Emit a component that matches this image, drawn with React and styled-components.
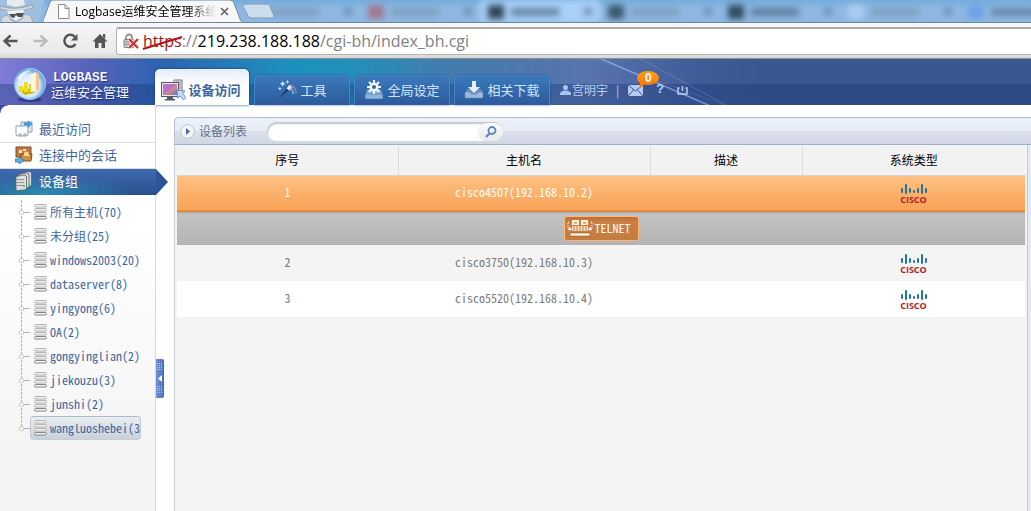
import React from "react";
import styled, { createGlobalStyle, css } from "styled-components";

const ui = `"Noto Sans CJK SC", "Liberation Sans", sans-serif`;
const chromeFont = `"Open Sans", "Noto Sans CJK SC", sans-serif`;

const GlobalStyle = createGlobalStyle`
  *, *::before, *::after { box-sizing: border-box; }
  body { margin: 0; background: #fff; font: 12px/16px ${ui}; color: #000; }
  button, input { font: inherit; color: inherit; border: 0; padding: 0; margin: 0; background: none; }
  a { color: inherit; text-decoration: none; }
  ul { list-style: none; margin: 0; padding: 0; }
  svg { display: block; flex: none; }
`;

const Page = styled.div`
  display: flex;
  flex-direction: column;
  min-height: 100vh;
  overflow: hidden;
`;

/* ---------- browser chrome ---------- */

const TabStrip = styled.div`
  display: flex;
  height: 23px;
  overflow: hidden;
  background: linear-gradient(#73addb, #8fb9e3 40%, #8db6e1);
  border-bottom: 1px solid #6788ab;
`;

const BrowserTab = styled.div`
  display: flex;
  align-items: center;
  position: relative;
  z-index: 1;
  flex: none;
  width: 200px;
  height: 23px;
  margin-left: -1px;
  padding: 0 15px 0 14px;
`;

const TabShape = styled.svg`
  position: absolute;
  z-index: -1;
  inset: 0;
`;

const TabTitle = styled.span`
  flex: 1;
  margin: 0 4px 0 5px;
  overflow: hidden;
  white-space: nowrap;
  font: 12px/20px ${chromeFont};
  mask-image: linear-gradient(90deg, #000 80%, transparent);
`;

const IconButton = styled.button`
  position: relative;
  z-index: 1;
  display: flex;
  align-items: center;
  justify-content: center;
`;

const BackgroundTabs = styled.div`
  display: flex;
  flex: none;
  margin-left: -38px;
  filter: blur(3px);
`;

const BackgroundTab = styled.div`
  display: flex;
  align-items: center;
  gap: 7px;
  flex: none;
  width: 120px;
  height: 23px;
  padding-left: 8px;
  background: ${(p) => (p.$lit ? "#a9d0f8" : "transparent")};
`;

const Smudge = styled.i`
  width: ${(p) => p.$w}px;
  height: ${(p) => p.$h}px;
  margin-left: ${(p) => (p.$push ? "auto" : 0)};
  margin-right: ${(p) => (p.$push ? "8px" : 0)};
  background: ${(p) => p.$c};
`;

const Toolbar = styled.div`
  display: flex;
  align-items: center;
  height: 36px;
  padding: 0 0 0 2px;
  background: linear-gradient(#f7f7f7, #e9e9e9 85%, #d6d6d6);
  border-bottom: 1px solid #8f8f8f;
`;

const ToolButtons = styled.div`
  display: flex;
  gap: 13px;
  width: 114px;
`;

const AddressBar = styled.div`
  display: flex;
  align-items: center;
  gap: 4px;
  flex: 1;
  height: 28px;
  padding-left: 6px;
  background: #fff;
  border: 1px solid #b4b4b4;
  border-top: 2px solid #a8a8a8;
  border-right: 0;
  border-radius: 3px 0 0 3px;
`;

const Url = styled.div`
  font: 16px/24px ${chromeFont};
  color: #808080;
  white-space: nowrap;
  outline: 0;
`;

const Host = styled.span`
  color: #000;
`;

const BadScheme = styled.span`
  position: relative;
  color: #a51414;
  &::after {
    content: "";
    position: absolute;
    left: -1px;
    right: -1px;
    top: 12px;
    height: 2px;
    background: #b01515;
    transform: rotate(-17deg);
  }
`;

/* ---------- application header ---------- */

const Header = styled.header`
  display: flex;
  position: relative;
  height: 46px;
  background:
    linear-gradient(transparent 54%, rgba(20, 50, 115, 0.36) 54%, rgba(20, 50, 115, 0.3)),
    linear-gradient(90deg, #7f7cd6 0, #5763bb 90px, #2d63b2 160px, #1c91bd 290px, #2290bb 350px, #447cad 450px, #5873ae 590px, #3f5c98 700px, #3b578f 760px);
`;

const Beams = styled.svg`
  position: absolute;
  top: 0;
  left: 590px;
`;

const Brand = styled.div`
  display: flex;
  align-items: center;
  gap: 4px;
  position: relative;
  flex: none;
  width: 155px;
  padding: 4px 0 0 12px;
  color: #f4f6ff;
`;

const BrandText = styled.div`
  display: flex;
  flex-direction: column;
  font: 13px/14px ${ui};
  white-space: nowrap;
  text-shadow: 1px 1px 1px #1c2f78;
`;

const BrandName = styled.strong`
  padding-left: 2px;
  font: bold 13px/15px "Liberation Mono", monospace;
`;

const MainNav = styled.nav`
  position: relative;
  display: flex;
  align-items: flex-end;
  gap: 4px;
`;

const NavTab = styled.a`
  display: flex;
  align-items: center;
  justify-content: center;
  gap: 3px;
  width: 96px;
  height: 30px;
  border: 1px solid rgba(90, 150, 215, 0.6);
  border-bottom: 0;
  border-radius: 5px 5px 0 0;
  background: linear-gradient(#3a79bb, #2c5a9c);
  box-shadow: 0 0 2px #1d4b8d;
  color: #d3e3fb;
  font-size: 13px;
  padding-bottom: 1px;
  white-space: nowrap;
  ${(p) =>
    p.$active &&
    css`
      gap: 2px;
      width: 94px;
      height: 36px;
      margin-right: 1px;
      border: 0;
      background: linear-gradient(#e6edf9, #fff 50%);
      box-shadow: 0 0 3px #123a78;
      color: #3e65a2;
      font-weight: bold;
      padding: 6px 2px 0 0;
    `}
`;

const UserBar = styled.div`
  display: flex;
  align-items: center;
  position: relative;
  height: 30px;
  margin: 16px 0 0 10px;
  color: #b9cdf3;
`;

const UserName = styled.span`
  margin: 0 8px 0 1px;
`;

const MailButton = styled(IconButton)`
  width: 15px;
  margin: 0 13px 0 9px;
`;

const Badge = styled.span`
  position: absolute;
  left: 9px;
  bottom: 11px;
  width: 22px;
  height: 14px;
  border-radius: 50%;
  background: linear-gradient(#ff9f0a, #f57b12);
  color: #fff;
  font: bold 12px/14px "Liberation Sans", sans-serif;
  text-align: center;
  &::after {
    content: "";
    position: absolute;
    left: 3px;
    top: 12px;
    border-top: 5px solid #f57b12;
    border-right: 6px solid transparent;
  }
`;

const HelpButton = styled(IconButton)`
  width: 8px;
  margin-right: 13px;
  font: bold 13px/16px "Liberation Mono", monospace;
`;

/* ---------- body ---------- */

const Body = styled.div`
  display: flex;
  flex: 1;
`;

const Sidebar = styled.aside`
  flex: none;
  width: 156px;
  border-right: 1px solid #d9d9d9;
  background: linear-gradient(#fff 30%, #f3f3f3 90%);
  position: relative;
  &::before {
    content: "";
    position: absolute;
    left: 0;
    top: 0;
    width: 8px;
    height: 8px;
    background: radial-gradient(circle at 100% 100%, transparent 7px, #3e4ba5 8px);
  }
`;

const SideLink = styled.a`
  display: flex;
  align-items: center;
  gap: 6px;
  position: relative;
  height: 26px;
  padding: 0 0 2px 15px;
  border-bottom: 1px solid #dcdcdc;
  color: #41669c;
  font-size: 13px;
  ${(p) =>
    p.$active &&
    css`
      margin-right: -1px;
      border: 0;
      color: #fff;
      background:
        radial-gradient(ellipse at 42px 24px, rgba(45, 145, 180, 0.9), transparent 90px),
        linear-gradient(#3f6aae, #285091);
      &::after {
        content: "";
        position: absolute;
        left: 100%;
        top: 0;
        border: 13px solid transparent;
        border-left: 12px solid #2b5598;
        border-right: 0;
      }
    `}
`;

const SideMenu = styled.ul`
  padding-top: 12px;
`;

const Tree = styled.ul`
  margin: 5px 14px 0 21px;
`;

const TreeItem = styled.li`
  display: flex;
  align-items: center;
  height: 24px;
  background: repeating-linear-gradient(#b2b2c0 0 3px, transparent 3px 4px) 0 0 / 1px ${(p) => (p.$last ? "12px" : "24px")} no-repeat;
  &::before {
    content: "";
    flex: none;
    width: 5px;
    height: 5px;
    margin-left: -2px;
    border: 1px solid #c6c6d0;
    border-radius: 2px;
    background: #fff;
  }
`;

const Twig = styled.span`
  flex: none;
  width: 6px;
  border-top: 1px dashed #b2b2c0;
`;

const TreeLink = styled.a`
  display: flex;
  align-items: center;
  gap: 2px;
  flex: 1;
  min-width: 0;
  height: 24px;
  padding-left: 3px;
  border: 1px solid transparent;
  border-radius: 4px;
  color: #41669c;
  overflow: hidden;
  white-space: nowrap;
  font-feature-settings: "hwid";
  ${(p) =>
    p.$selected &&
    css`
      border-color: #a9bac8 #bccad6 #c6cfd8;
      background: linear-gradient(#eaeef1, #c9d1d9);
    `}
`;

const Gutter = styled.div`
  flex: none;
  width: 18px;
`;

const Splitter = styled.button`
  display: flex;
  flex-direction: column;
  align-items: center;
  justify-content: space-between;
  width: 8px;
  height: 39px;
  margin-top: 254px;
  padding: 4px 0;
  border-radius: 0 2px 2px 0;
  background: linear-gradient(90deg, #6f8fd2, #5378c4 80%, #3f62ad);
`;

const Panel = styled.main`
  display: flex;
  flex-direction: column;
  flex: 1;
  min-width: 0;
  margin-top: 12px;
  border-left: 1px solid #cdd0d6;
  border-radius: 5px 0 0 0;
  background: #f3f3f3;
`;

const PanelHeader = styled.div`
  display: flex;
  align-items: center;
  height: 28px;
  padding-left: 5px;
  margin-left: -1px;
  border: 1px solid #b5c0d6;
  border-right: 0;
  border-bottom: 1px solid #9fb0cd;
  border-radius: 5px 0 0 0;
  background: linear-gradient(#ecf1fa, #e6ebf6 50%, #dae0eb 50%, #d0d7e4);
`;

const PanelTitle = styled.h1`
  margin: 0 20px 0 4px;
  font: 12px/16px ${ui};
  color: #66738a;
`;

const SearchForm = styled.form`
  display: flex;
  width: 236px;
  height: 19px;
  border-radius: 9px;
  background: #fff;
  box-shadow: inset 1px 2px 2px #c3c6cb;
`;

const SearchInput = styled.input`
  flex: 1;
  min-width: 0;
  padding: 0 8px;
  outline: 0;
`;

const SearchButton = styled(IconButton)`
  width: 25px;
  margin-top: 1px;
  border-radius: 9px;
  background: linear-gradient(#fbfbfb, #e9e9e9);
  box-shadow: 0 0 1px #bbb;
`;

const PanelBody = styled.div`
  flex: 1;
  margin-right: 3px;
  padding: 1px 2px 0;
  border-right: 1px solid #c3c9d4;
  box-shadow: 3px 0 0 #e3eaf6;
`;

const Table = styled.table`
  width: 100%;
  border-collapse: collapse;
  table-layout: fixed;
  text-align: center;
  font-feature-settings: "hwid";
`;

const HeadCell = styled.th`
  width: ${(p) => (p.$width ? `${p.$width}px` : "auto")};
  height: 29px;
  padding: 0 0 1px;
  font-weight: normal;
  background: #f2f2f2;
  border-bottom: 1px solid #d4d4d4;
  & + & {
    border-left: 1px solid #dcdcdc;
  }
`;

const Row = styled.tr`
  height: 36px;
  background: ${(p) => (p.$odd ? "#fff" : "#f4f4f4")};
  color: #7b7b7b;
  ${(p) =>
    p.$selected &&
    css`
      height: 37px;
      background: linear-gradient(#ffc286, #f8a65b 80%, #f8a65b 94%, #e48a38 94%);
      color: #fff;
    `}
`;

const ActionRow = styled.tr`
  height: 33px;
  background: linear-gradient(#a4a4a4, #c3c3c3 2px, #b3b3b3);
`;

const Cell = styled.td`
  padding: 0 0 3px;
`;

const ActionCell = styled.td`
  padding: 0;
`;

const TelnetButton = styled.button`
  display: flex;
  align-items: center;
  gap: 2px;
  width: 75px;
  height: 25px;
  margin: 0 auto;
  padding: 0 0 1px 2px;
  border: 1px solid #fdb777;
  border-radius: 3px;
  background: linear-gradient(#bd7038, #cb8046 25%, #c57b3d);
  color: #fff;
  font-feature-settings: "hwid";
`;

const CiscoMark = styled.div`
  display: inline-flex;
  flex-direction: column;
  align-items: center;
  padding-top: 4px;
  vertical-align: middle;
  color: #b11e2b;
  font: bold 9px/9px "Open Sans", sans-serif;
`;

/* ---------- drawings ---------- */

const Incognito = () => (
  <svg width="45" height="23" viewBox="0 0 45 23">
    <path d="M0 0h45l-6 20q-1 3-5 3H0z" fill="#9ebfdf" />
    <path d="M7 0h17l1 5-9 2-9-2z" fill="#e8eaec" />
    <path d="M0 6q14 5 32-1l1 3Q15 14 0 9z" fill="#d2d6da" stroke="#8d959d" strokeWidth=".7" />
    <path d="M7 11l17-1-2 7-6 4-6-4z" fill="#f0f1f2" />
    <path d="M9 14h6l2-1 7 0-2 4-4 0-2-2-2 3-3-1z" fill="#4d5257" />
    <path d="M1 23l1-6 6-2 3 5 5 2 6-3 3-5 6 2 2 7z" fill="#d6d9dc" stroke="#9aa2aa" strokeWidth=".7" />
  </svg>
);

const PageIcon = () => (
  <svg width="12" height="15" viewBox="0 0 12 15" fill="#fff" stroke="#8c8c8c">
    <path d="M.5.5H7L11 4.500v10H.5zM7 .5v4h4" />
  </svg>
);

const Close = () => (
  <svg width="9" height="9" viewBox="0 0 9 9" stroke="#666" strokeWidth="1.7">
    <path d="M1 1l7 7M8 1L1 8" />
  </svg>
);

const Arrow = ({ back }) => (
  <svg width="17" height="14" viewBox="0 0 16 14" fill="none" stroke={back ? "#555" : "#bcbcbc"} strokeWidth="2.4">
    <path d={back ? "M15 7H3M8 1.5L2 7l6 5.500" : "M1 7h12M8 1.500L14 7l-6 5.500"} />
  </svg>
);

const Reload = () => (
  <svg width="17" height="16" viewBox="0 0 17 16">
    <path d="M13.500 11a6 6 0 1 1-.5-7" fill="none" stroke="#555" strokeWidth="2.5" />
    <path d="M15.500 1v6.500H9z" fill="#555" />
  </svg>
);

const Home = () => (
  <svg width="16" height="16" viewBox="0 0 16 16" fill="#555">
    <path d="M8 1l7.500 7.500H13V15h-3.500v-5h-3v5H3V8.500H.5z" />
    <path d="M11 1h2.200v5L11 4z" />
  </svg>
);

const BrokenLock = () => (
  <svg width="16" height="16" viewBox="0 0 16 16" fill="none">
    <path d="M3 7V4.500a3 3 0 0 1 6 0V7" stroke="#929292" strokeWidth="1.8" />
    <rect x="1" y="6.500" width="10" height="8" rx="1" fill="#c9c9c9" stroke="#858585" />
    <path d="M2 9h8M2 11.500h8" stroke="#999" />
    <path d="M6 6l9 9M15 6l-9 9" stroke="#fff" strokeWidth="3.500" />
    <path d="M6 6l9 9M15 6l-9 9" stroke="#d3302d" strokeWidth="2.200" />
  </svg>
);

const Globe = () => (
  <svg width="35" height="35" viewBox="0 0 35 35">
    <defs>
      <radialGradient id="orb" cx=".45" cy=".55" r=".58">
        <stop offset="0" stopColor="#fff" />
        <stop offset=".6" stopColor="#d3e9fb" />
        <stop offset=".85" stopColor="#6ba6e3" />
        <stop offset="1" stopColor="#b9dcfa" />
      </radialGradient>
    </defs>
    <ellipse cx="18" cy="32.500" rx="12" ry="2.500" fill="#222f75" opacity=".7" />
    <circle cx="18" cy="17" r="16" fill="url(#orb)" />
    <path d="M6 23l18-2-2 5-9 2z" fill="#d3b400" />
    <path d="M7 19h4v6H7zM12 15h4v10h-4z" fill="#f0dc1c" />
    <path d="M17 17h5v8h-5z" fill="#e6cf14" />
    <path d="M19 8l5-3v19l-5 1z" fill="#fdf8d8" />
    <path d="M24 5l3 2v15l-3 2z" fill="#f5c48c" />
    <path d="M5 12q5-9 15-9-9 3-11 9z" fill="#fff" opacity=".8" />
  </svg>
);

const Monitor = () => (
  <svg width="25" height="23" viewBox="0 0 25 23">
    <path d="M13 1h8v15h-8z" fill="#e9ebee" stroke="#777" />
    <path d="M15 3h5M15 5h5M15 7h5M15 9h5" stroke="#888" />
    <rect x=".5" y="3.500" width="17" height="14" fill="#e8e8ee" stroke="#555a68" />
    <path d="M2 5h14v11H2z" fill="url(#screen)" />
    <path d="M6 18h6v2h2v1.500H4V20h2z" fill="#555a68" />
    <path d="M16 11l8 1-2.500 2.500 3.500 4-2.500 2.500-3.500-4-2.500 2z" fill="#c4ddfb" stroke="#4577ba" strokeWidth=".8" />
    <defs>
      <linearGradient id="screen" x2="1" y2="1">
        <stop stopColor="#d56fbb" />
        <stop offset=".5" stopColor="#a978c8" />
        <stop offset=".52" stopColor="#e68a76" />
        <stop offset="1" stopColor="#6276cc" />
      </linearGradient>
    </defs>
  </svg>
);

const Wand = () => (
  <svg width="20" height="20" viewBox="1 0 21 21">
    <path d="M2 20L13 7l3 2z" fill="#24375f" />
    <path d="M11 9l3-4 3 3-3 3z" fill="#eef3fb" />
    <path d="M15 5q6 3 6 9" fill="none" stroke="#da8ba4" strokeWidth="2" opacity=".6" />
    <path d="M14 8q4 2 4 7" fill="none" stroke="#91cdf5" strokeWidth="2" opacity=".6" />
    <path d="M7 1l1 2 2 1-2 1-1 2-1-2-2-1 2-1zM12 0l.7 1.300L14 2l-1.300.7L12 4l-.7-1.300L10 2l1.300-.7zM4 7l.7 1.300L6 9l-1.300.7L4 11l-.7-1.300L2 9l1.300-.7z" fill="#c6eaff" />
  </svg>
);

const GearTray = () => (
  <svg width="20" height="20" viewBox="0 0 20 20">
    <path d="M4 9h12l3 6H1z" fill="#7eaede" />
    <rect x="1" y="14" width="18" height="5" rx="1" fill="#8fb4de" stroke="#456c9f" strokeWidth=".6" />
    <circle cx="10" cy="7" r="3.300" fill="none" stroke="#f6f8fc" strokeWidth="2.400" />
    <path d="M10 0v3M10 11v3M3 7h3M14 7h3M5 2l2 2M13 10l2 2M15 2l-2 2M7 10l-2 2" stroke="#f6f8fc" strokeWidth="2" />
  </svg>
);

const DownloadTray = () => (
  <svg width="20" height="20" viewBox="0 0 20 20">
    <path d="M3 9h14l2 5H1z" fill="#5f90cc" />
    <path d="M1 12h5l1 2h6l1-2h5v6H1z" fill="#9db8dc" stroke="#6686ae" strokeWidth=".6" />
    <path d="M8 1h4v6h4l-6 6-6-6h4z" fill="#e8f0fc" />
  </svg>
);

const RecentIcon = () => (
  <svg width="18" height="18" viewBox="0 0 18 18">
    <path d="M6 2h11v10H6z" fill="#e3eaf1" stroke="#92a0ae" />
    <path d="M1 6h12v8q0 2-2 2H3q-2 0-2-2z" fill="#fafcfe" stroke="#93a1b0" />
    <path d="M4 16v-2h2v2M9 16v-2h2v2" stroke="#93a1b0" fill="none" />
    <path d="M9 3h4V1l4 3-4 3.500V5H9z" fill="#45a4e8" stroke="#2776bd" strokeWidth=".5" />
  </svg>
);

const SessionIcon = () => (
  <svg width="18" height="18" viewBox="0 0 18 18">
    <path d="M1 1h15v10H1z" fill="#bf7b3d" stroke="#7f4a20" />
    <path d="M4 4h3v3H4zM8 3h3v2H8z" fill="#fbe1b8" />
    <path d="M6 8h11l-1 7H6z" fill="#d08f3c" stroke="#7f4a20" />
    <path d="M9 7q2-3 5 0v3H9z" fill="#ffd98a" />
    <path d="M0 13h4v-2l5 3.500L4 18v-2H0z" fill="#55b7f1" stroke="#1d6fae" strokeWidth=".7" />
  </svg>
);

const ServersIcon = () => (
  <svg width="18" height="20" viewBox="0 0 18 20">
    {[[6, 1], [3.5, 2.5], [1, 4.5]].map(([x, y]) => (
      <g key={x}>
        <path d={`M${x} ${y + 1}l8-1.500 2.500 1v12.500l-2 1.500-8.500.5z`} fill="#dde0df" stroke="#59605f" strokeWidth=".8" />
        <path d={`M${x + 1} ${y + 4}h7M${x + 1} ${y + 7}h7M${x + 1} ${y + 10}h7`} stroke="#8b9390" />
      </g>
    ))}
    <path d="M8 15h2M13 13h2" stroke="#3fc23f" strokeWidth="1.500" />
  </svg>
);

const Stack = () => (
  <svg width="14" height="16" viewBox="0 0 14 16">
    {[1, 5, 9, 13].map((y, i) => (
      <g key={y}>
        <rect x=".5" y={y - 0.5} width="12" height="2.500" rx="1.200" fill="#f4f4f4" stroke={i === 3 ? "#858585" : "#b0b0b0"} />
        {i < 3 && <path d={`M2 ${y + 3}h10`} stroke="#cfcfcf" />}
      </g>
    ))}
  </svg>
);

const Dots = () => (
  <svg width="6" height="8" viewBox="0 0 6 8" fill="#b9caee">
    {[0, 2, 4, 6].map((y) => [0, 2, 4].map((x) => <rect key={`${x}${y}`} x={x} y={y} width="1" height="1" />))}
  </svg>
);

const TelnetIcon = () => (
  <svg width="26" height="18" viewBox="0 0 26 18">
    <path d="M5 1h7v5H5zM14 1h7v5h-7z" fill="#fff3df" />
    <path d="M7 3h3v1.500H7zM16 3h3v1.500h-3z" fill="#d88b36" />
    <path d="M5 7h16v5H5z" fill="#f6dcc2" />
    <path d="M7 7v5M10 7v5M13 7v5M16 7v5M19 7v5" stroke="#c98650" />
    <path d="M3 14h20v3H3z" fill="#fff8ec" stroke="#925829" strokeWidth=".6" />
    <path d="M2 3H1v7h2M24 3h1v7h-2" fill="none" stroke="#fff" strokeDasharray="1 1" />
    <path d="M2 8l3 2-3 2zM24 8l-3 2 3 2z" fill="#fff" />
  </svg>
);

const Cisco = () => (
  <CiscoMark>
    <svg width="28" height="11" viewBox="0 0 28 11" fill="#23749a">
      {[[1, 4, 5], [5, 0, 10], [9, 4, 5], [13, 6, 3], [17, 4, 5], [21, 0, 10], [25, 4, 5]].map(([x, y, h]) => (
        <rect key={x} x={x} y={y} width="2" height={h} rx="1" />
      ))}
    </svg>
    CISCO
  </CiscoMark>
);

const groups = [
  "所有主机(70)", "未分组(25)", "windows2003(20)", "dataserver(8)", "yingyong(6)",
  "OA(2)", "gongyinglian(2)", "jiekouzu(3)", "junshi(2)", "wangluoshebei(3)",
];

const hosts = ["cisco4507(192.168.10.2)", "cisco3750(192.168.10.3)", "cisco5520(192.168.10.4)"];

const openTabs = [
  { icon: "#98b6d3", text: "#7f9fc0" },
  { icon: "#a2798f", text: "#7f9fc0" },
  { icon: "#304658", text: "#6887a8", lit: true },
  { icon: "#3a586c", text: "#7f9fc0" },
  { icon: "#2f4c5f", text: "#5f7f9f" },
  { icon: "#a9cdf0", text: "#7f9fc0" },
  { icon: "#6ba2e5", text: "#6988a9" },
];

export default function App() {
  return (
    <Page>
      <GlobalStyle />
      <TabStrip>
        <Incognito />
        <BrowserTab>
          <TabShape width="200" height="23" viewBox="0 0 200 23">
            <path d="M-4 23q3-1 4-5L6 2q1-2 3-2h177q3 0 4 3l6 16q1 3 4 4z" fill="#f7f7f7" stroke="#6788ab" />
          </TabShape>
          <PageIcon />
          <TabTitle>Logbase运维安全管理系统</TabTitle>
          <IconButton aria-label="关闭标签页"><Close /></IconButton>
        </BrowserTab>
        <IconButton aria-label="打开新的标签页">
          <svg width="34" height="23" viewBox="3 0 34 23">
            <path d="M4 4h22q2 0 3 2l4 10q0 2-2 2H11q-3 0-4-2L2 6q0-2 2-2z" fill="#cbdcec" stroke="#7d9bba" />
          </svg>
        </IconButton>
        <BackgroundTabs aria-hidden="true">
          {openTabs.map((t, i) => (
            <BackgroundTab key={i} $lit={t.lit}>
              <Smudge $w={16} $h={14} $c={t.icon} />
              <Smudge $w={48} $h={8} $c={t.text} />
              <Smudge $w={8} $h={7} $c="#6a8bad" $push />
            </BackgroundTab>
          ))}
        </BackgroundTabs>
      </TabStrip>

      <Toolbar>
        <ToolButtons>
          <IconButton aria-label="后退"><Arrow back /></IconButton>
          <IconButton aria-label="前进"><Arrow /></IconButton>
          <IconButton aria-label="重新加载"><Reload /></IconButton>
          <IconButton aria-label="主页"><Home /></IconButton>
        </ToolButtons>
        <AddressBar>
          <BrokenLock />
          <Url role="textbox" aria-label="地址栏" contentEditable suppressContentEditableWarning spellCheck={false}>
            <BadScheme>https</BadScheme>://<Host>219.238.188.188</Host>/cgi-bh/index_bh.cgi
          </Url>
        </AddressBar>
      </Toolbar>

      <Header>
        <Beams width="140" height="46" viewBox="0 0 140 46" fill="none" stroke="#9dbcf5">
          <path d="M0-5l125 54" strokeWidth="1.500" opacity=".65" />
          <path d="M45-3l95 51" opacity=".25" />
          <path d="M5 0l130 46" opacity=".15" />
        </Beams>
        <Brand>
          <Globe />
          <BrandText>
            <BrandName>LOGBASE</BrandName>
            <span>运维安全管理</span>
          </BrandText>
        </Brand>
        <MainNav>
          <NavTab href="#devices" $active><Monitor />设备访问</NavTab>
          <NavTab href="#tools"><Wand />工具</NavTab>
          <NavTab href="#settings"><GearTray />全局设定</NavTab>
          <NavTab href="#downloads"><DownloadTray />相关下载</NavTab>
        </MainNav>
        <UserBar>
          <svg width="11" height="10" viewBox="0 0 11 10" fill="#a9c3f3">
            <circle cx="5.500" cy="2.500" r="2.500" />
            <path d="M0 10V8q1-2 4-2.500h3Q10 6 11 8v2z" />
          </svg>
          <UserName>宫明宇</UserName>|
          <MailButton aria-label="消息">
            <svg width="15" height="11" viewBox="0 0 15 11">
              <path d="M0 0h15v11H0z" fill="#b5cbf4" />
              <path d="M0 0l7.500 6L15 0M0 11l5.500-6M15 11L9.500 5" fill="none" stroke="#34548e" />
            </svg>
            <Badge>0</Badge>
          </MailButton>
          <HelpButton>?</HelpButton>
          <IconButton aria-label="退出">
            <svg width="11" height="9" viewBox="0 0 11 9" fill="none" stroke="#b5cbf4" strokeWidth="1.500">
              <path d="M2.500 2H1v6h9V2H8.500M5.500 0v5" />
            </svg>
          </IconButton>
        </UserBar>
      </Header>

      <Body>
        <Sidebar>
          <SideMenu>
            <li><SideLink href="#recent"><RecentIcon />最近访问</SideLink></li>
            <li><SideLink href="#sessions"><SessionIcon />连接中的会话</SideLink></li>
            <li><SideLink href="#groups" $active><ServersIcon />设备组</SideLink></li>
          </SideMenu>
          <Tree>
            {groups.map((g, i) => (
              <TreeItem key={g} $last={i === groups.length - 1}>
                <Twig />
                <TreeLink href="#group" $selected={i === groups.length - 1}><Stack />{g}</TreeLink>
              </TreeItem>
            ))}
          </Tree>
        </Sidebar>
        <Gutter>
          <Splitter aria-label="收起侧栏">
            <Dots />
            <svg width="4" height="7" viewBox="0 0 4 7"><path d="M4 0v7L0 3.500z" fill="#fff" /></svg>
            <Dots />
          </Splitter>
        </Gutter>
        <Panel>
          <PanelHeader>
            <svg width="15" height="15" viewBox="0 0 15 15">
              <circle cx="7.500" cy="7.500" r="6.800" fill="#f3f5f8" stroke="#bcc6d2" />
              <path d="M6 4l4 3.500L6 11z" fill="#49699f" />
            </svg>
            <PanelTitle>设备列表</PanelTitle>
            <SearchForm onSubmit={(e) => e.preventDefault()}>
              <SearchInput aria-label="搜索设备" />
              <SearchButton aria-label="搜索">
                <svg width="12" height="12" viewBox="0 0 12 12" fill="none" stroke="#5b82c6">
                  <circle cx="7" cy="4.500" r="3.500" strokeWidth="1.800" />
                  <path d="M4.500 7.500L1 11" strokeWidth="2.200" />
                </svg>
              </SearchButton>
            </SearchForm>
          </PanelHeader>
          <PanelBody>
            <Table>
              <thead>
                <tr>
                  <HeadCell $width={221}>序号</HeadCell>
                  <HeadCell $width={252}>主机名</HeadCell>
                  <HeadCell $width={152}>描述</HeadCell>
                  <HeadCell>系统类型</HeadCell>
                </tr>
              </thead>
              <tbody>
                {hosts.map((h, i) => (
                  <React.Fragment key={h}>
                    <Row $selected={i === 0} $odd={i === 2}>
                      <Cell>{i + 1}</Cell>
                      <Cell>{h}</Cell>
                      <Cell />
                      <Cell><Cisco /></Cell>
                    </Row>
                    {i === 0 && (
                      <ActionRow>
                        <ActionCell colSpan={4}>
                          <TelnetButton><TelnetIcon />TELNET</TelnetButton>
                        </ActionCell>
                      </ActionRow>
                    )}
                  </React.Fragment>
                ))}
              </tbody>
            </Table>
          </PanelBody>
        </Panel>
      </Body>
    </Page>
  );
}
